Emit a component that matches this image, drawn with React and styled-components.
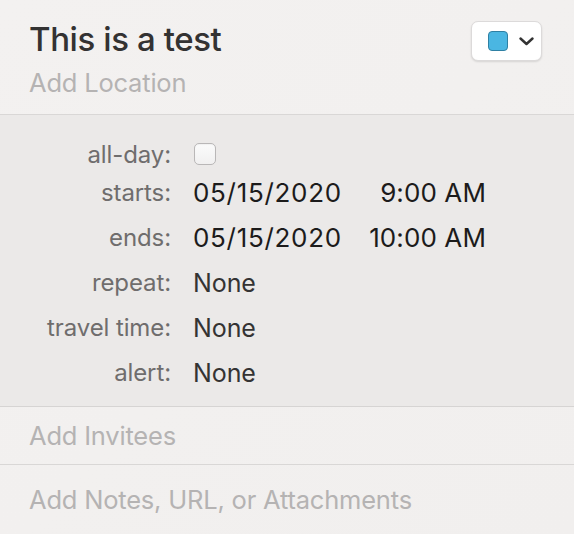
import React from "react";
import styled, { createGlobalStyle } from "styled-components";

const GlobalStyle = createGlobalStyle`
  html, body {
    margin: 0;
    padding: 0;
    background: #f2f0ef;
  }
  body {
    font-family: "Inter", "Roboto", "Liberation Sans", sans-serif;
    -webkit-font-smoothing: antialiased;
  }
`;

const rows = [
  { label: "repeat:", value: "None" },
  { label: "travel time:", value: "None" },
  { label: "alert:", value: "None" },
];

const App = () => {
  return (
    <Popover>
      <GlobalStyle />
      <Header>
        <TitleRow>
          <Title>This is a test</Title>
          <ColorButton type="button">
            <Swatch />
            <svg width="15" height="9" viewBox="0 0 15 9" fill="none">
              <path
                d="M1.5 1.5 L7.5 7 L13.5 1.5"
                stroke="#333"
                strokeWidth="2.4"
                strokeLinecap="round"
                strokeLinejoin="round"
              />
            </svg>
          </ColorButton>
        </TitleRow>
        <Placeholder>Add Location</Placeholder>
      </Header>

      <Details>
        <Label $short>all-day:</Label>
        <Value $short>
          <Checkbox />
        </Value>

        <Label>starts:</Label>
        <Value $strong>
          <DateTime>
            <DatePart>05/15/2020</DatePart>
            <TimePart>9:00 AM</TimePart>
          </DateTime>
        </Value>

        <Label>ends:</Label>
        <Value $strong>
          <DateTime>
            <DatePart>05/15/2020</DatePart>
            <TimePart>10:00 AM</TimePart>
          </DateTime>
        </Value>

        {rows.map((r) => (
          <React.Fragment key={r.label}>
            <Label>{r.label}</Label>
            <Value>{r.value}</Value>
          </React.Fragment>
        ))}
      </Details>

      <Field $height={58}>
        <Placeholder>Add Invitees</Placeholder>
      </Field>
      <Field $height={69} $last>
        <Placeholder>Add Notes, URL, or Attachments</Placeholder>
      </Field>
    </Popover>
  );
};

const Popover = styled.div`
  width: 574px;
  height: 534px;
  overflow: hidden;
  background: linear-gradient(135deg, #f3f1f0 0%, #f1efee 100%);
  display: flex;
  flex-direction: column;
`;

const Header = styled.div`
  height: 115px;
  flex-shrink: 0;
  box-sizing: border-box;
  padding: 21px 32px 0 29px;
  border-bottom: 1px solid #d9d7d6;
`;

const TitleRow = styled.div`
  display: flex;
  justify-content: space-between;
  align-items: flex-start;
  height: 47px;
`;

const Title = styled.h1`
  margin: 0;
  font-size: 33px;
  line-height: 36px;
  font-weight: 500;
  color: #333232;
  letter-spacing: -0.4px;
`;

const ColorButton = styled.button`
  width: 71px;
  height: 40px;
  box-sizing: border-box;
  border: 1px solid #dcdada;
  border-radius: 7px;
  background: #ffffff;
  box-shadow: 0 1px 2px rgba(0, 0, 0, 0.12);
  display: flex;
  align-items: center;
  gap: 11px;
  padding: 0 0 0 16px;
`;

const Swatch = styled.span`
  width: 20px;
  height: 20px;
  box-sizing: border-box;
  border-radius: 4px;
  background: #4ab6e2;
  border: 1.5px solid #2f80a3;
`;

const Placeholder = styled.div`
  font-size: 25.5px;
  line-height: 30px;
  color: #b5b3b3;
  letter-spacing: -0.2px;
`;

const Details = styled.div`
  flex-shrink: 0;
  background: #ebe9e8;
  border-bottom: 1px solid #d6d4d3;
  padding: 23px 0 11px;
  display: grid;
  grid-template-columns: 171px 1fr;
  column-gap: 22px;
`;

const Label = styled.div`
  height: ${(p) => (p.$short ? 32 : 45)}px;
  display: flex;
  align-items: center;
  justify-content: flex-end;
  font-size: 24px;
  color: #6f6d6d;
  letter-spacing: -0.1px;
`;

const Value = styled.div`
  height: ${(p) => (p.$short ? 32 : 45)}px;
  display: flex;
  align-items: center;
  font-size: ${(p) => (p.$strong ? 26 : 25)}px;
  color: ${(p) => (p.$strong ? "#1c1b1b" : "#343333")};
  letter-spacing: -0.1px;
`;

const DateTime = styled.div`
  width: 293px;
  display: flex;
  justify-content: space-between;
`;

const DatePart = styled.span`
  letter-spacing: 0.7px;
`;

const TimePart = styled.span`
  letter-spacing: 0.1px;
`;

const Checkbox = styled.span`
  width: 22px;
  height: 22px;
  box-sizing: border-box;
  margin-left: 1px;
  border-radius: 5px;
  border: 1px solid #b9b7b7;
  background: linear-gradient(#fbfbfb, #f1f0f0);
  box-shadow: inset 0 1px 1px rgba(0, 0, 0, 0.04);
`;

const Field = styled.div`
  height: ${(p) => p.$height}px;
  box-sizing: border-box;
  padding: 0 29px;
  display: flex;
  align-items: center;
  border-bottom: ${(p) => (p.$last ? "none" : "1px solid #d9d7d6")};
  flex-shrink: 0;
`;

export default App;
